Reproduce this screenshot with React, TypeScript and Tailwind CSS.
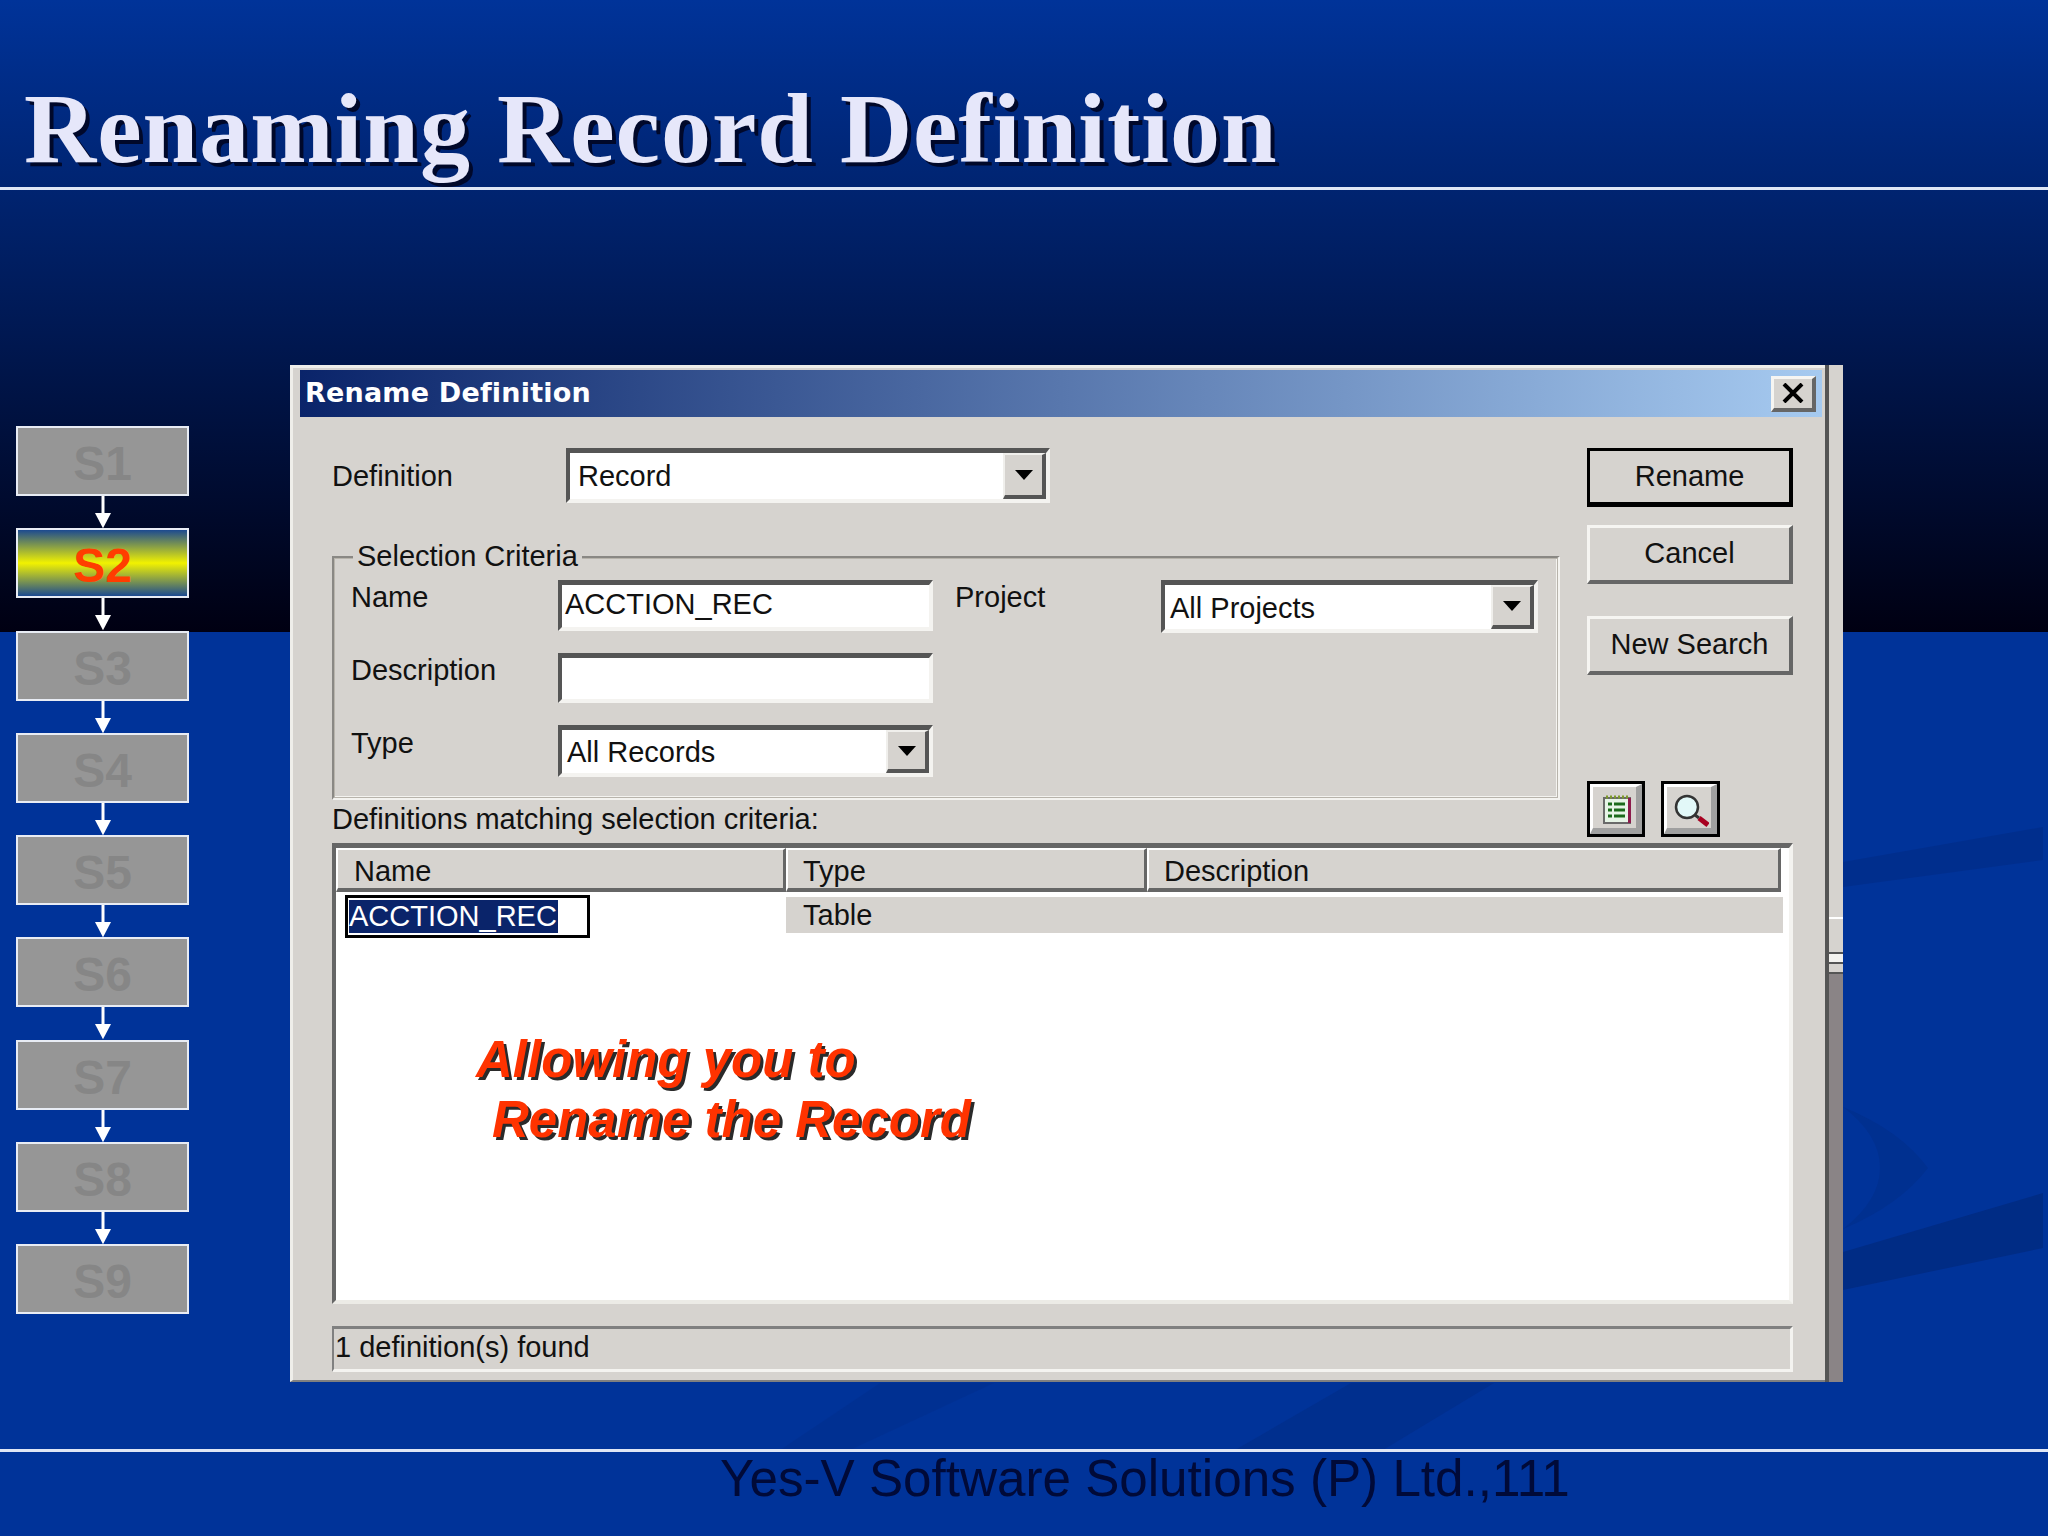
import React from "react";

const steps = ["S1", "S2", "S3", "S4", "S5", "S6", "S7", "S8", "S9"];

const ui = "font-['Liberation_Sans',sans-serif] text-[29px] leading-[30px] text-[#111] whitespace-nowrap";
const sunken =
  "border-t-[5px] border-l-[4px] border-b-[4px] border-r-[4px] border-t-[#555] border-l-[#555] border-b-[#f4f3f0] border-r-[#f4f3f0]";
const raised =
  "border-t-[3px] border-l-[3px] border-b-[4px] border-r-[4px] border-t-[#f6f5f2] border-l-[#f6f5f2] border-b-[#666] border-r-[#666] bg-[#d6d3cf]";

function DropArrow() {
  return (
    <div className="w-[43px] h-full shrink-0 flex items-center justify-center bg-[#d6d3cf] border-t-[2px] border-l-[2px] border-t-[#f0efec] border-l-[#f0efec] border-b-[4px] border-r-[4px] border-b-[#555] border-r-[#555]">
      <svg width="18" height="10" viewBox="0 0 18 10">
        <path d="M0 0h18L9 10z" fill="#000" />
      </svg>
    </div>
  );
}

function Combo({ text, className, textClass }: { text: string; className: string; textClass: string }) {
  return (
    <div className={`${className} ${sunken} flex bg-white`}>
      <div className={`flex-1 ${ui} ${textClass}`}>{text}</div>
      <DropArrow />
    </div>
  );
}

function Btn({ label, className }: { label: string; className: string }) {
  return (
    <div className={`w-[206px] h-[59px] flex items-center justify-center pb-[2px] ${ui} ${className}`}>{label}</div>
  );
}

function IconBtn({ className, children }: { className: string; children: React.ReactNode }) {
  return (
    <div className={`${className} h-[56px] border-[3px] border-black`}>
      <div className="w-full h-full flex items-center justify-center bg-[#d6d3cf] border-t-[3px] border-l-[3px] border-t-white border-l-white border-b-[6px] border-r-[6px] border-b-[#a0a0a0] border-r-[#a0a0a0]">
        {children}
      </div>
    </div>
  );
}

function HeaderCell({ label, className }: { label: string; className: string }) {
  return (
    <div
      className={`${className} h-[44px] ${ui} leading-[42px] border-t-[2px] border-l-[2px] border-t-white border-l-white border-b-[4px] border-r-[3px] border-b-[#666] border-r-[#666] bg-[#d6d3cf]`}
    >
      {label}
    </div>
  );
}

export default function App() {
  return (
    <div className="relative w-[2048px] h-[1536px] overflow-hidden flex flex-col bg-[linear-gradient(to_bottom,#003399_0,#000012_632px,#003399_632px)]">
      {/* faded swooshes of the slide template */}
      <svg className="absolute inset-0" width="2048" height="1536" viewBox="0 0 2048 1536">
        <g fill="#002c85">
          <path d="M1843 862L2043 827V860L1843 887z" fillOpacity="0.6" />
          <path d="M1843 1252L2043 1193V1248L1843 1290z" />
          <path d="M1843 1107Q1900 1130 1928 1168Q1900 1205 1843 1229Q1880 1200 1880 1168Q1880 1135 1843 1107z" fillOpacity="0.45" />
          <path d="M1494 1383H1351L1235 1450H1383z" fillOpacity="0.55" />
          <path d="M994 1383H880L780 1450H850z" fillOpacity="0.3" />
        </g>
      </svg>

      <header className="relative h-[190px] shrink-0 border-b-[3px] border-[#dfe6f5]">
        <h1 className="pl-[24px] pt-[74px] font-['Liberation_Serif',serif] font-bold text-[100px] leading-[110px] tracking-[1px] text-[#e6e7fa] whitespace-nowrap [text-shadow:4px_4px_0_#00082a]">
          Renaming Record Definition
        </h1>
      </header>

      <main className="relative flex items-start h-[1259px] shrink-0 pl-[16px]">
        <div className="w-[173px] mt-[236px] flex flex-col">
          {steps.map((s, i) => (
            <div key={s} className="flex flex-col">
              <div
                className={
                  s === "S2"
                    ? "h-[70px] flex items-center justify-center pt-[6px] border-[2px] border-[#e8ecf4] font-['Liberation_Sans',sans-serif] font-bold text-[48px] text-[#ff3d00] bg-[linear-gradient(to_bottom,#1c4a90,#f2f200_50%,#1c4a90)]"
                    : "h-[70px] flex items-center justify-center pt-[6px] border-[2px] border-[#e8ecf4] font-['Liberation_Sans',sans-serif] font-bold text-[48px] text-[#868686] bg-[#969696]"
                }
              >
                {s}
              </div>
              {i < steps.length - 1 && (
                <svg className="self-center" width="18" height="32.3" viewBox="0 0 18 32.3">
                  <path d="M7.5 0h3v18h-3z" fill="#fff" />
                  <path d="M1 17h16L9 32.3z" fill="#fff" />
                </svg>
              )}
            </div>
          ))}
        </div>

        {/* dialog */}
        <div className="ml-[101px] mt-[175px] w-[1553px] h-[1017px] flex">
          <div className="w-[1535px] h-full bg-[#d6d3cf] border-t-[3px] border-l-[3px] border-t-[#efeeea] border-l-[#efeeea] border-b-[2px] border-b-[#808080] pt-[2px] pl-[7px] pr-[3px]">
            <div className="h-[47px] flex items-center justify-between pl-[5px] pr-[6px] bg-[linear-gradient(to_right,#0a246a,#a6caf0)]">
              <span className="font-['DejaVu_Sans',sans-serif] font-bold text-[27px] tracking-[0.2px] text-white whitespace-nowrap">
                Rename Definition
              </span>
              <div className={`w-[45px] h-[36px] flex items-center justify-center ${raised}`}>
                <svg width="24" height="20" viewBox="0 0 24 20">
                  <path d="M3 1l18 18M21 1L3 19" stroke="#000" strokeWidth="4" fill="none" />
                </svg>
              </div>
            </div>

            <div className="pl-[32px] pt-[31px]">
              <div className="flex gap-[27px] items-start">
                <div className="w-[1228px]">
                  <div className="flex">
                    <div className={`w-[234px] pt-[13px] ${ui}`}>Definition</div>
                    <Combo text="Record" className="w-[484px] h-[55px]" textClass="pl-[8px] leading-[47px]" />
                  </div>

                  <div className="relative mt-[53px] h-[244px] border-t-[3px] border-l-[3px] border-b-[4px] border-r-[4px] border-t-[#8a8884] border-l-[#8a8884] border-b-[#f4f3f0] border-r-[#f4f3f0] [outline:1px_solid_#b8b4ac] outline-offset-[-3px]">
                    <div className={`absolute left-[18px] top-[-18px] px-[4px] bg-[#d6d3cf] ${ui} text-[28.5px]`}>Selection Criteria</div>
                    <div className="flex pl-[16px] pt-[21px]">
                      <div className="flex flex-col">
                        <div className="flex h-[51px]">
                          <div className={`w-[207px] pt-[2px] ${ui}`}>Name</div>
                          <div className={`w-[375px] bg-white ${sunken} pl-[3px] ${ui} leading-[39px]`}>ACCTION_REC</div>
                        </div>
                        <div className="flex h-[50px] mt-[22px]">
                          <div className={`w-[207px] pt-[2px] ${ui}`}>Description</div>
                          <div className={`w-[375px] bg-white ${sunken}`} />
                        </div>
                        <div className="flex h-[52px] mt-[22px]">
                          <div className={`w-[207px] pt-[3px] ${ui}`}>Type</div>
                          <Combo text="All Records" className="w-[375px] h-[52px]" textClass="pl-[5px] leading-[44px]" />
                        </div>
                      </div>
                      <div className={`w-[206px] ml-[22px] pt-[2px] ${ui}`}>Project</div>
                      <Combo text="All Projects" className="w-[377px] h-[53px]" textClass="pl-[5px] leading-[46px]" />
                    </div>
                  </div>

                  <div className={`mt-[4px] ${ui}`}>Definitions matching selection criteria:</div>
                </div>

                <div className="w-[206px] flex flex-col">
                  <Btn label="Rename" className="bg-[#d6d3cf] border-[3px] border-black border-b-[5px] border-r-[4px]" />
                  <Btn label="Cancel" className={`mt-[18px] ${raised}`} />
                  <Btn label="New Search" className={`mt-[32px] ${raised}`} />
                  <div className="flex gap-[16px] mt-[106px]">
                    <IconBtn className="w-[58px]">
                      <svg className="ml-[5px] mt-[4px]" width="30" height="30" viewBox="0 0 30 30">
                        <path d="M2 3h26v25H2z" fill="#e6f4e6" stroke="#6a6a6a" strokeWidth="2" />
                        <path d="M26 3h3v25h-3z" fill="#8c1c4c" />
                        <path d="M4 2h22" stroke="#7d9a2a" strokeWidth="3" strokeDasharray="2 2" />
                        <path d="M6 9h4M12 9h11M6 15h4M12 15h11M6 21h4M12 21h11" stroke="#1a6a1a" strokeWidth="3" />
                      </svg>
                    </IconBtn>
                    <IconBtn className="w-[59px]">
                      <svg width="40" height="40" viewBox="0 0 40 40">
                        <circle cx="18" cy="19" r="11" fill="#e2f8f8" stroke="#333" strokeWidth="2.5" />
                        <path d="M26 27l4 3" stroke="#333" strokeWidth="3" />
                        <path d="M30 30l9 7" stroke="#a80020" strokeWidth="5" />
                      </svg>
                    </IconBtn>
                  </div>
                </div>
              </div>

              {/* results list */}
              <div className="relative mt-[6px] w-[1461px] h-[461px] bg-white border-t-[5px] border-l-[4px] border-b-[4px] border-r-[4px] border-t-[#666] border-l-[#666] border-b-[#ecebe6] border-r-[#f4f3f0]">
                <div className="flex">
                  <HeaderCell label="Name" className="w-[450px] pl-[16px]" />
                  <HeaderCell label="Type" className="w-[361px] pl-[15px]" />
                  <HeaderCell label="Description" className="w-[634px] pl-[15px]" />
                </div>
                <div className="flex items-start pt-[3px]">
                  <div className="ml-[9px] w-[245px] h-[43px] border-[3px] border-black pl-[1px] pt-[2px] shrink-0">
                    <div className="w-[209px] h-[33px] bg-[#0a246a] text-white font-['Liberation_Sans',sans-serif] text-[29px] leading-[33px] whitespace-nowrap">
                      ACCTION_REC
                    </div>
                  </div>
                  <div className={`ml-[196px] mt-[2px] w-[997px] h-[36px] pl-[17px] bg-[#d6d3cf] ${ui} leading-[36px]`}>Table</div>
                </div>

                {/* callout laid over the list */}
                <div className="absolute left-[140px] top-[182px] font-['Liberation_Sans',sans-serif] font-bold italic text-[51px] leading-[60px] text-[#ff3300] whitespace-nowrap [text-shadow:3px_3px_0_#2a2a2a]">
                  <div>Allowing you to</div>
                  <div className="pl-[16px]">Rename the Record</div>
                </div>
              </div>

              <div className={`mt-[22px] w-[1461px] h-[46px] border-t-[3px] border-l-[2px] border-b-[3px] border-r-[3px] border-t-[#808080] border-l-[#808080] border-b-[#f4f3f0] border-r-[#f4f3f0] pl-[1px] ${ui} leading-[36px]`}>
                1 definition(s) found
              </div>
            </div>
          </div>

          <div className="w-[18px] h-full flex flex-col border-l-[4px] border-[#555]">
            <div className="h-[552px] bg-[#d6d3cf]" />
            <div className="h-[2px] bg-white" />
            <div className="h-[33px] bg-[#d6d3cf]" />
            <div className="h-[2px] bg-[#555]" />
            <div className="h-[8px] bg-[#f4f3f0]" />
            <div className="h-[2px] bg-[#555]" />
            <div className="h-[8px] bg-[#d6d3cf]" />
            <div className="h-[2px] bg-[#555]" />
            <div className="flex-1 bg-[#8a8486]" />
          </div>
        </div>
      </main>

      <footer className="relative flex-1 border-t-[3px] border-[#dfe6f5] pl-[720px]">
        <div className="font-['Liberation_Sans',sans-serif] text-[51.2px] leading-[54px] text-[#000a38] whitespace-nowrap">
          Yes-V Software Solutions (P) Ltd.,111
        </div>
      </footer>
    </div>
  );
}
